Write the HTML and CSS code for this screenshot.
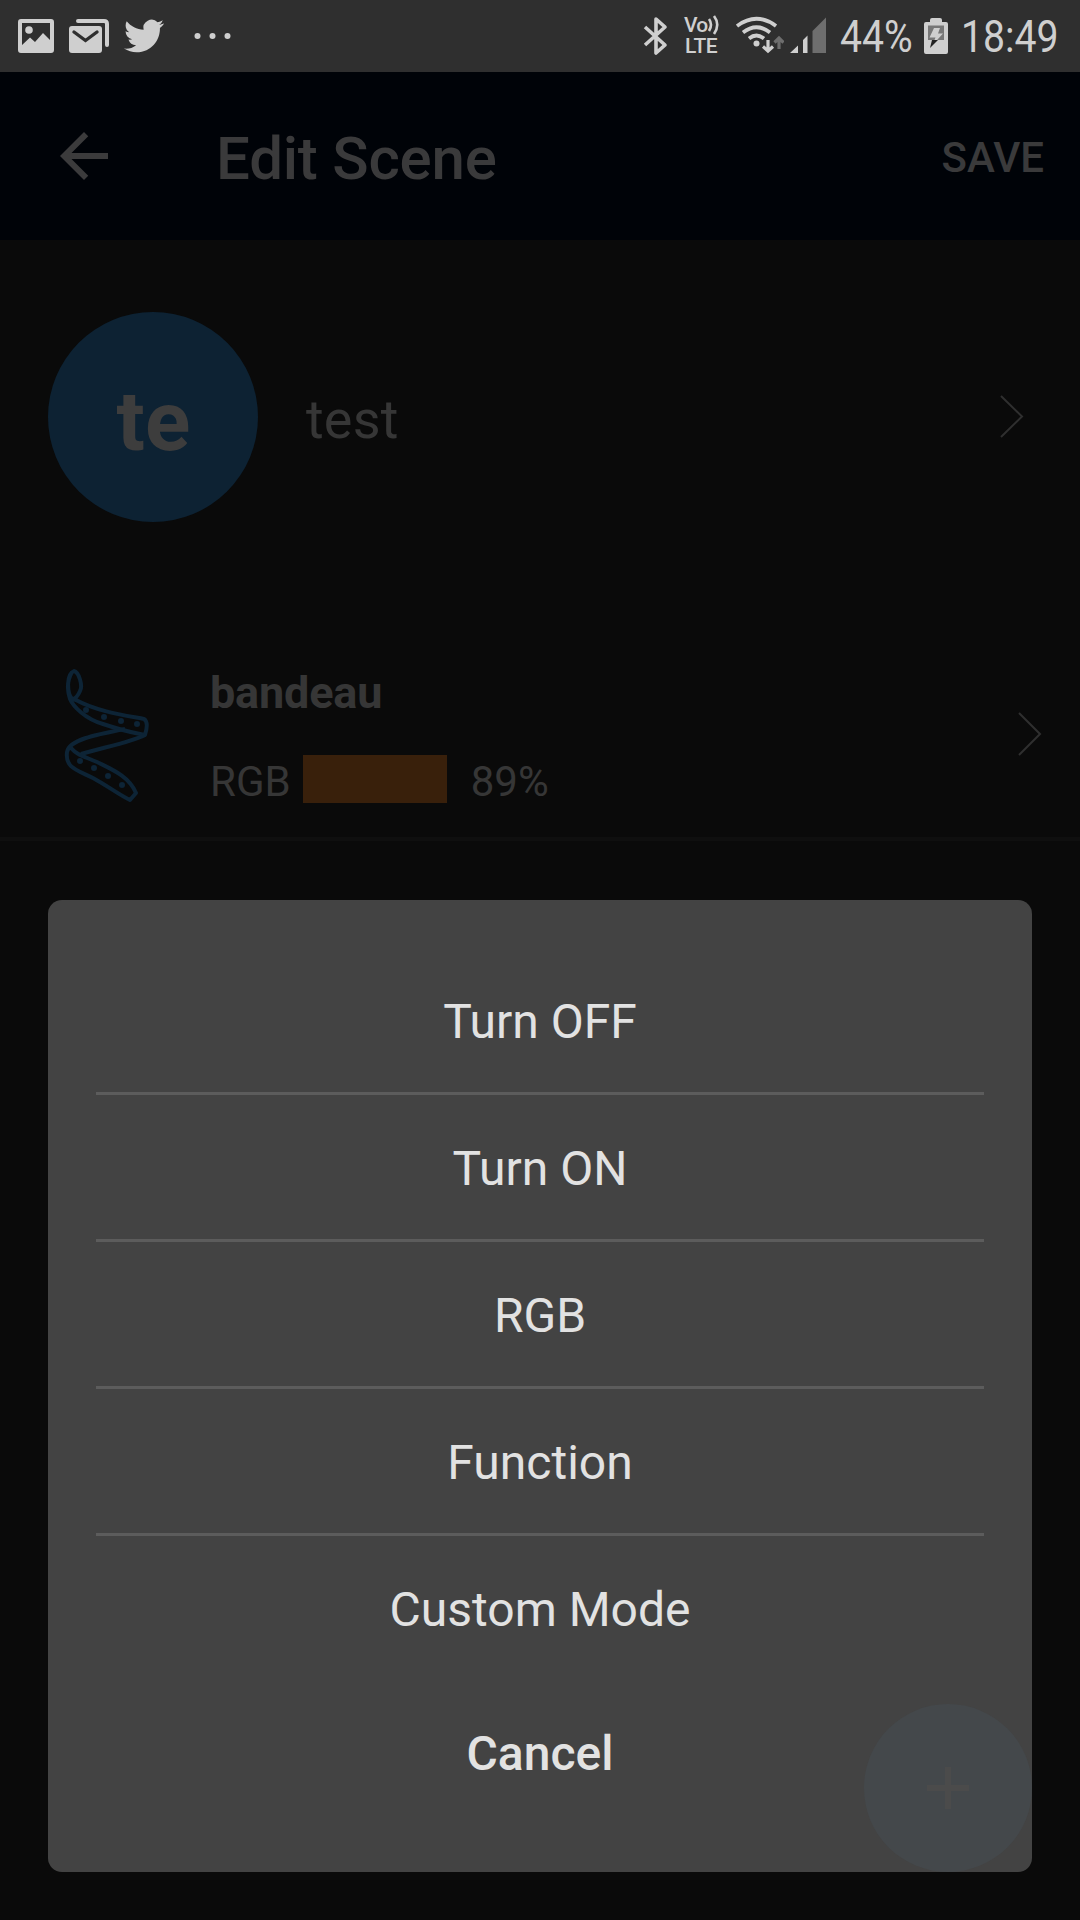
FILE: index.html
```html
<!DOCTYPE html>
<html lang="en">
<head>
    <meta charset="UTF-8">
    <meta name="viewport" content="width=device-width, initial-scale=1.0">
    <title>Edit Scene</title>
    <link rel="stylesheet" href="styles.css">
</head>
<body>
    <div class="status-bar">
        <div class="status-left">
            <svg width="36" height="72" viewBox="18 0 36 72">
                <rect x="20" y="21" width="32" height="30" rx="1" fill="none" stroke="#cfcfcf" stroke-width="4"/>
                <circle cx="29" cy="30" r="3.8" fill="#cfcfcf"/>
                <path d="M21 46l9-8.500 5 4.500 8-9 8 8v11H21z" fill="#cfcfcf"/>
            </svg>
            <svg width="40" height="72" viewBox="70 0 40 72">
                <path d="M79 21h26q3 0 3 3v21" fill="none" stroke="#cfcfcf" stroke-width="4" stroke-linecap="round"/>
                <rect x="70" y="26" width="33" height="27" rx="3" fill="#cfcfcf"/>
                <path d="M75 32l11.500 8.500L98 32" fill="none" stroke="#2f2f2f" stroke-width="3.400" stroke-linecap="round"/>
            </svg>
            <svg width="40" height="40" viewBox="0 0 24 24">
                <path fill="#cfcfcf" d="M23.953 4.570a10 10 0 01-2.825.775 4.958 4.958 0 002.163-2.723c-.951.555-2.005.959-3.127 1.184a4.920 4.920 0 00-8.384 4.482C7.690 8.095 4.067 6.130 1.640 3.162a4.822 4.822 0 00-.666 2.475c0 1.710.870 3.213 2.188 4.096a4.904 4.904 0 01-2.228-.616v.060a4.923 4.923 0 003.946 4.827 4.996 4.996 0 01-2.212.085 4.936 4.936 0 004.604 3.417 9.867 9.867 0 01-6.102 2.105c-.390 0-.779-.023-1.170-.067a13.995 13.995 0 007.557 2.209c9.053 0 13.998-7.496 13.998-13.985 0-.210 0-.420-.015-.630A9.935 9.935 0 0024 4.590z"/>
            </svg>
            <svg class="more" width="38" height="72" viewBox="194 0 38 72" fill="#cfcfcf">
                <circle cx="197.500" cy="36" r="3"/>
                <circle cx="212.500" cy="36" r="3"/>
                <circle cx="227.500" cy="36" r="3"/>
            </svg>
        </div>
        <div class="status-right">
            <svg width="26" height="72" viewBox="643 0 26 72">
                <path d="M645 27l20 18-9 8V19l9 8-20 18" fill="none" stroke="#cfcfcf" stroke-width="3.600" stroke-linejoin="round"/>
            </svg>
            <div class="volte">
                <div class="volte-top">
                    <span>Vo</span>
                    <svg width="13" height="20" viewBox="0 0 13 20">
                        <path d="M2 4q4 5.500 0 12M7 1q6.500 8.500 0 18" fill="none" stroke="#cfcfcf" stroke-width="2.600"/>
                    </svg>
                </div>
                <div class="volte-bottom">LTE</div>
            </div>
            <svg class="wifi" width="48" height="72" viewBox="736 0 48 72">
                <g fill="none" stroke="#cfcfcf" stroke-width="3.800">
                    <path d="M737 26q19.500-14.500 39 0M743 32.500q13.500-10.500 27 0M749 38.500q7.500-6 15 0"/>
                    <path d="M768 40v11M763 46.500l5 4.500 5-4.500" stroke-width="3.200"/>
                    <path d="M779 49V38M774.500 42.500l4.500-4.500 4.500 4.500" stroke="#6e6e6e" stroke-width="3.200"/>
                </g>
                <circle cx="756.500" cy="43.500" r="3" fill="#cfcfcf"/>
            </svg>
            <svg class="signal" width="36" height="72" viewBox="790 0 36 72">
                <path d="M790 53l8-7.500V53zM803 40l4.500-4.500V53H803z" fill="#cfcfcf"/>
                <path d="M812.500 31L826 17.500V53h-13.500z" fill="#6e6e6e"/>
            </svg>
            <span class="battery-text"><span class="condensed">44%</span></span>
            <svg class="battery" width="24" height="72" viewBox="924 0 24 72">
                <path d="M930 22v-2q0-2 2-2h8q2 0 2 2v2h4q2 0 2 2v28q0 2-2 2h-20q-2 0-2-2V24q0-2 2-2z" fill="#cfcfcf"/>
                <path d="M928 25.500h16V40h-16z" fill="#777"/>
                <path d="M934 28h6l-2 5.500h5L932.500 45l3-7.500h-6z" fill="#cfcfcf"/>
                <path d="M932 40h6l-8 8z" fill="#222"/>
            </svg>
            <span class="clock"><span class="condensed">18:49</span></span>
        </div>
    </div>

    <header class="app-bar">
        <svg class="back" width="72" height="72" viewBox="0 0 24 24" fill="#3b3b3c">
            <path d="M20 11H7.830l5.590-5.590L12 4l-8 8 8 8 1.410-1.410L7.830 13H20v-2z"/>
        </svg>
        <h1>Edit Scene</h1>
        <span class="save">SAVE</span>
    </header>

    <main>
        <div class="scene-row">
            <div class="avatar">te</div>
            <span class="scene-name">test</span>
            <svg class="chevron" width="25" height="44" viewBox="0 0 25 44">
                <path d="M2 1l21 20.500L2 42"/>
            </svg>
        </div>

        <div class="device-row">
            <svg class="strip" width="88" height="136" viewBox="64 668 88 136" fill="none" stroke="#0d2436" stroke-width="4" stroke-linejoin="round">
                <path d="M72 699C67 693 66 674 74 671C79 672 83 686 80 691Q77 698 73 699L76 700C96 711 123 715 144 719Q149 722 145 735L140 734Q124 731 103 724C85 719 73 706 70 699Q65 684 72 672"/>
                <path d="M125 729C94 735 69 740 67 752C65 768 77 770 93 778C106 785 121 796 130 800L136 793C129 776 111 769 97 762C83 756 77 755 71 748M145 735C132 742 105 747 81 754"/>
                <g fill="#0d2436" stroke="none">
                    <circle cx="86" cy="710" r="3"/>
                    <circle cx="104" cy="717" r="3"/>
                    <circle cx="121" cy="721" r="3"/>
                    <circle cx="137" cy="724" r="3"/>
                    <circle cx="80" cy="761" r="3"/>
                    <circle cx="94" cy="768" r="3"/>
                    <circle cx="108" cy="776" r="3"/>
                    <circle cx="122" cy="785" r="3"/>
                </g>
            </svg>
            <div class="device-info">
                <div class="device-name">bandeau</div>
                <div class="device-state">
                    <span class="state-text">RGB</span>
                    <span class="swatch"></span>
                    <span class="state-text">89%</span>
                </div>
            </div>
            <svg class="chevron" width="25" height="44" viewBox="0 0 25 44">
                <path d="M2 1l21 21L2 43"/>
            </svg>
        </div>
    </main>

    <div class="action-sheet">
        <div class="action">Turn OFF</div>
        <div class="action">Turn ON</div>
        <div class="action">RGB</div>
        <div class="action">Function</div>
        <div class="action last">Custom Mode</div>
        <div class="action cancel">Cancel</div>
    </div>

    <div class="fab">
        <svg width="42" height="42" viewBox="0 0 42 42">
            <path d="M21 0v42M0 21h42" stroke="#4b4b4b" stroke-width="6"/>
        </svg>
    </div>
</body>
</html>
```
FILE: styles.css
```css
* {
    box-sizing: border-box;
}

body {
    position: relative;
    margin: 0;
    width: 1080px;
    height: 1920px;
    overflow: hidden;
    background-color: #0a0a0a;
    font-family: Roboto, sans-serif;
    color: #363636;
}

svg {
    display: block;
    flex-shrink: 0;
}

/* Status bar */
.status-bar {
    display: flex;
    justify-content: space-between;
    height: 72px;
    padding: 0 22px 0 18px;
    background-color: #2f2f2f;
    color: #cfcfcf;
}

.status-left,
.status-right {
    display: flex;
    align-items: center;
}

.status-left {
    gap: 15px;
}

.more {
    margin-left: 15px;
}

.volte {
    width: 36px;
    margin-left: 15px;
    font-size: 21px;
    font-weight: 500;
    line-height: 20px;
    letter-spacing: -0.8px;
}

.volte-top {
    display: flex;
    height: 20px;
}

.volte-bottom {
    padding-left: 1px;
    line-height: 22px;
    letter-spacing: -0.4px;
}

.wifi {
    margin-left: 16px;
}

.signal {
    margin-left: 6px;
}

.battery-text,
.clock {
    padding-top: 2px;
    font-size: 45px;
    line-height: 72px;
    white-space: nowrap;
}

.battery-text {
    width: 72px;
    margin-left: 14px;
}

.battery {
    margin-left: 12px;
}

.clock {
    width: 97px;
    margin-left: 13px;
}

.condensed {
    display: inline-block;
    transform: scaleX(0.87);
    transform-origin: left;
}

/* App bar */
.app-bar {
    display: flex;
    align-items: center;
    height: 168px;
    padding: 0 36px 0 48px;
    background-color: #000308;
    color: #3a3a3b;
}

.app-bar h1 {
    margin: 4px 0 0 96px;
    font-size: 60px;
    font-weight: 500;
    letter-spacing: -0.2px;
}

.save {
    margin-left: auto;
    padding-top: 2px;
    font-size: 42px;
    font-weight: 500;
}

/* Scene and device rows */
.scene-row {
    display: flex;
    align-items: center;
    height: 354px;
    padding: 0 56px 0 48px;
}

.avatar {
    width: 210px;
    height: 210px;
    padding-left: 1px;
    border-radius: 50%;
    background-color: #0d2233;
    color: #3d3d3d;
    font-size: 84px;
    font-weight: 700;
    line-height: 220px;
    text-align: center;
}

.scene-name {
    margin-left: 48px;
    padding-top: 4px;
    font-size: 54px;
    letter-spacing: 0.2px;
}

.chevron {
    margin-left: auto;
    fill: none;
    stroke: #2f2f2f;
    stroke-width: 2;
}

.device-row {
    display: flex;
    align-items: center;
    height: 210px;
    margin-top: 37px;
    padding: 0 38px 0 64px;
    border-bottom: 4px solid #0f0f0f;
}

.strip {
    margin-top: 4px;
}

.device-info {
    margin-left: 58px;
}

.device-name {
    height: 54px;
    font-size: 45px;
    font-weight: 700;
    line-height: 56px;
    letter-spacing: -0.2px;
}

.device-state {
    display: flex;
    align-items: center;
    height: 48px;
    margin-top: 36px;
    font-size: 42px;
    line-height: 48px;
}

.state-text {
    padding-top: 6px;
}

.swatch {
    width: 144px;
    height: 48px;
    margin: 0 24px 0 12px;
    background-color: #39200b;
}

/* Action sheet */
.action-sheet {
    position: absolute;
    top: 900px;
    left: 48px;
    width: 984px;
    height: 972px;
    padding: 48px;
    border-radius: 14px;
    background-color: #434343;
    color: #e2e2e2;
}

.action {
    height: 147px;
    border-bottom: 3px solid #5c5c5c;
    font-size: 48px;
    line-height: 147px;
    text-align: center;
}

.action.last,
.action.cancel {
    height: 144px;
    border-bottom: none;
}

.action.cancel {
    font-weight: 500;
}

/* Floating button showing through the sheet */
.fab {
    position: absolute;
    top: 1704px;
    left: 864px;
    display: flex;
    align-items: center;
    justify-content: center;
    width: 168px;
    height: 168px;
    border-radius: 50%;
    background-color: #44484b;
}
```
